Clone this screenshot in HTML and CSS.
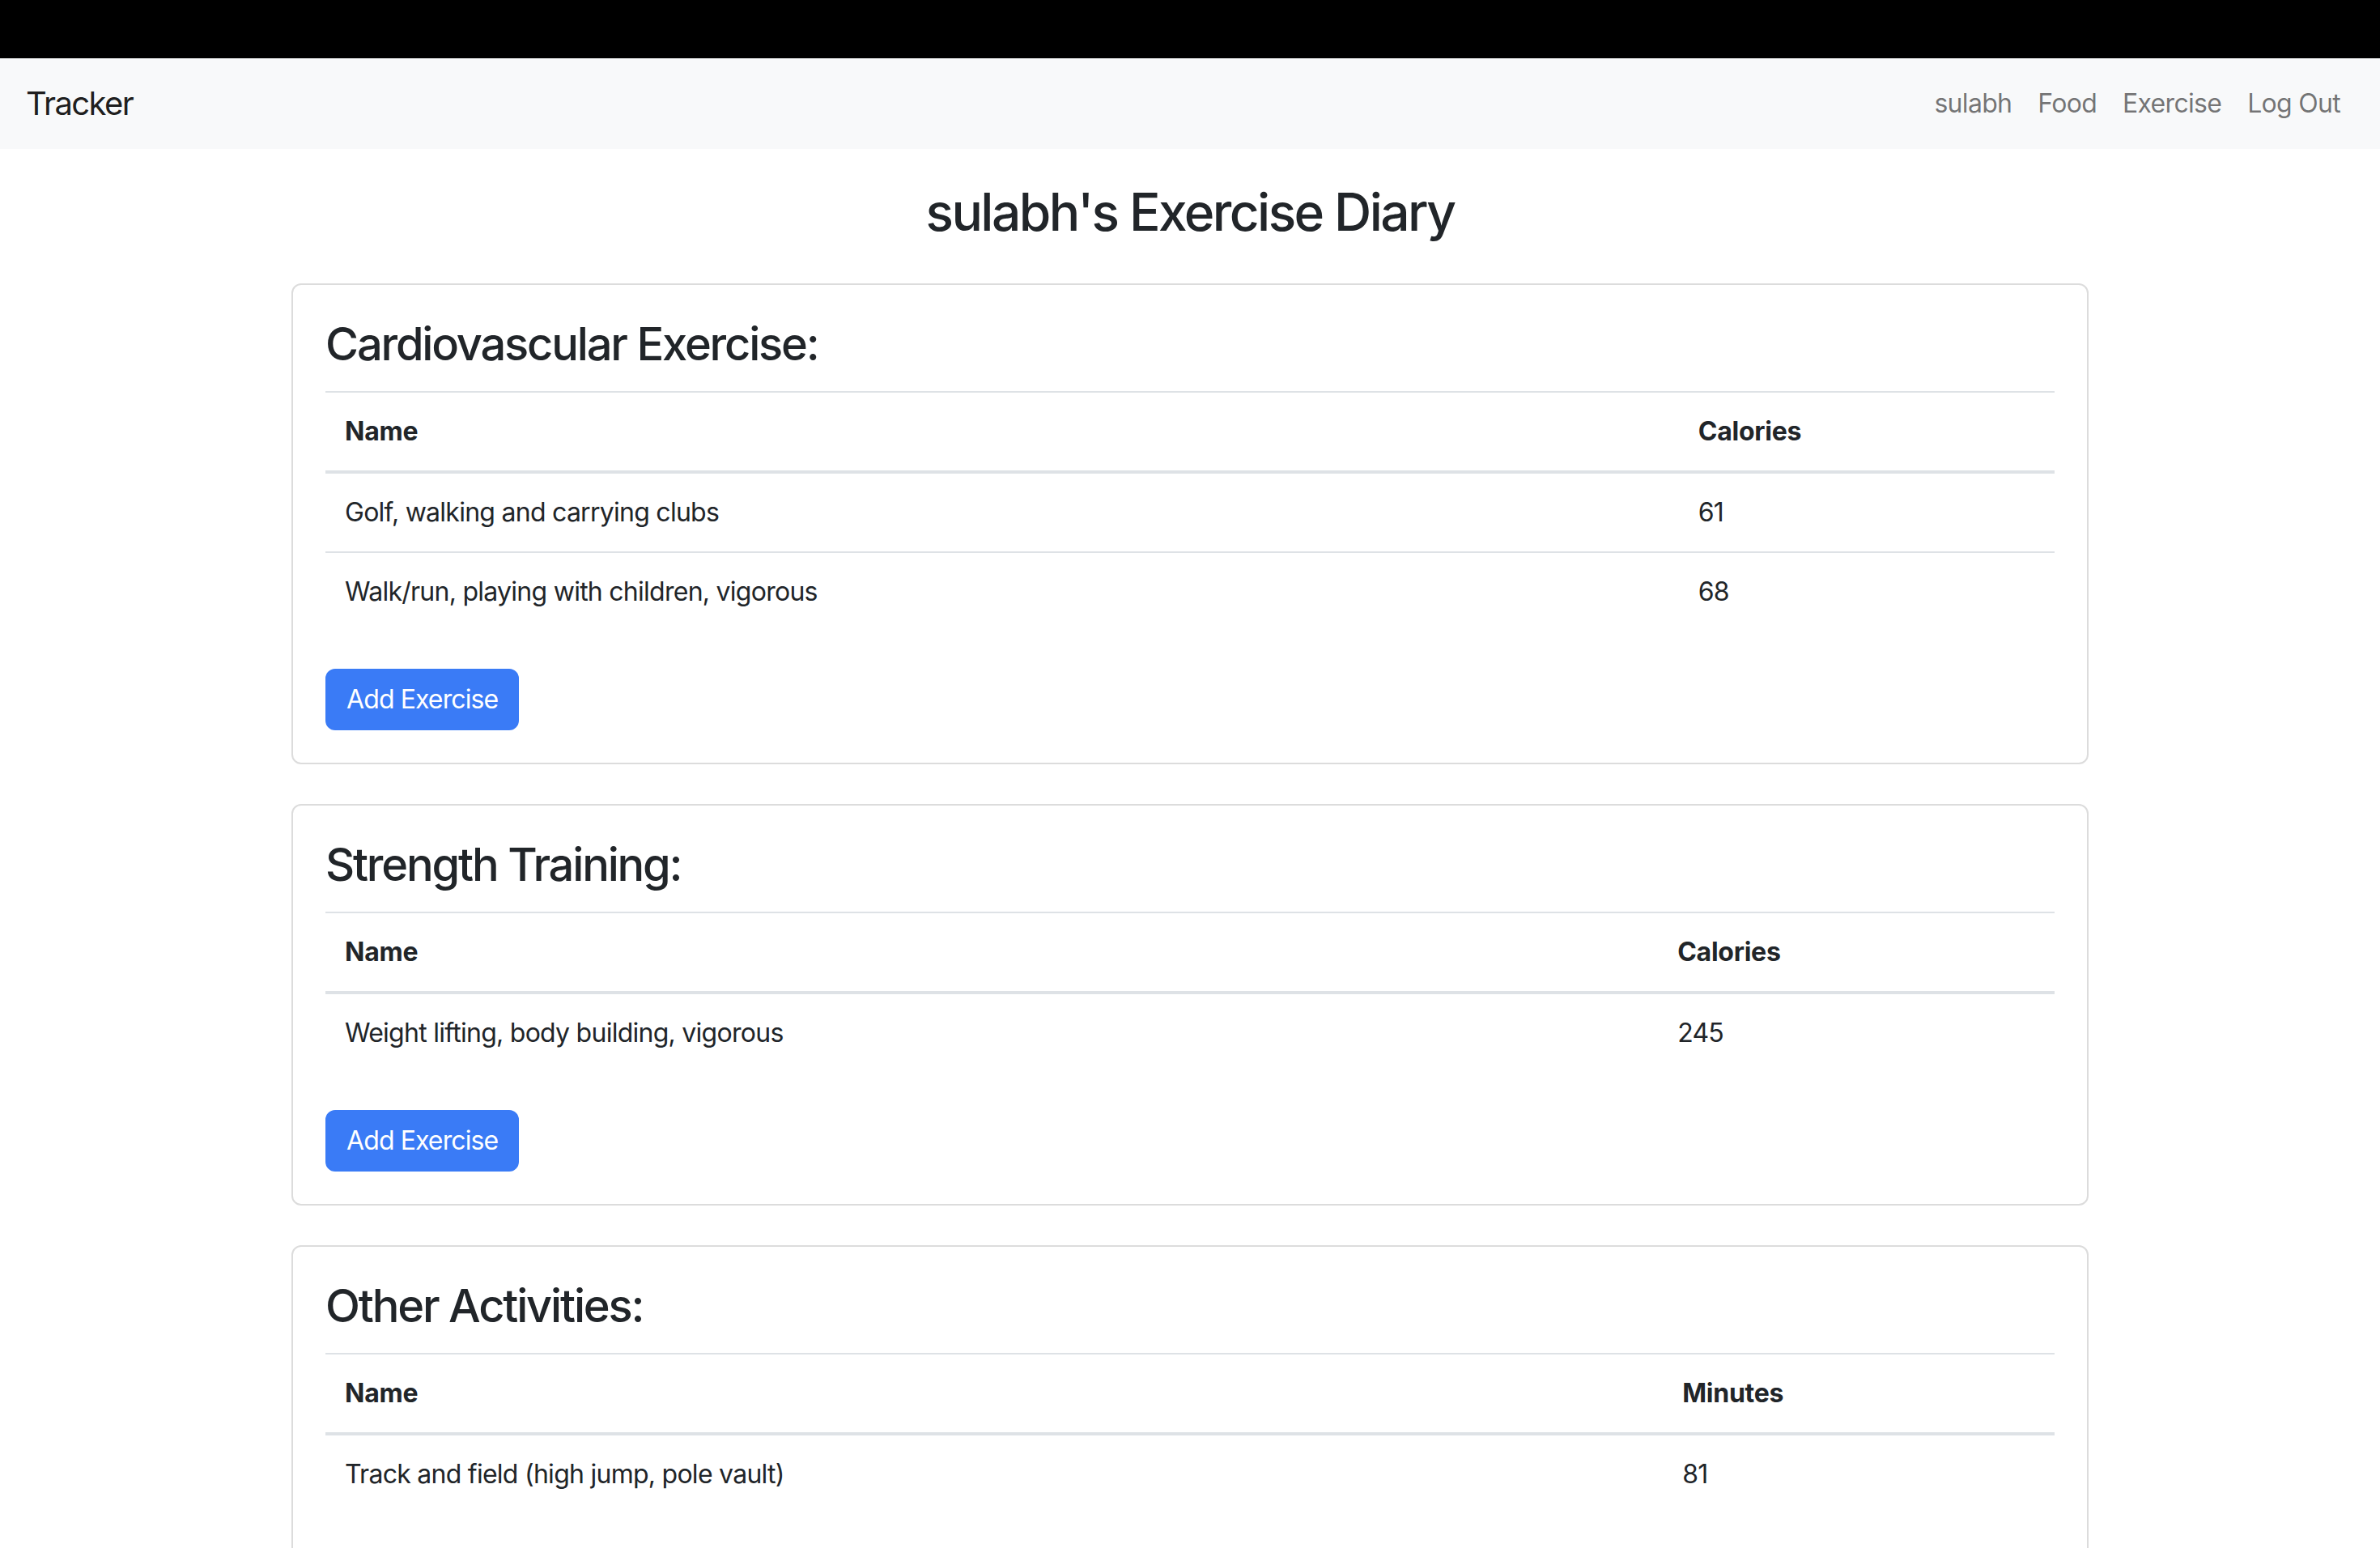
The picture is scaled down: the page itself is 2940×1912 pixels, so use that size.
FILE: index.html
```html
<!DOCTYPE html>
<html lang="en">
<head>
<meta charset="utf-8">
<title>Exercise Diary</title>
<link rel="stylesheet" href="styles.css">
</head>
<body>
<div class="topbar"></div>
<nav class="navbar">
  <a class="brand" href="#">Tracker</a>
  <div class="nav-links">
    <a class="nav-link" href="#">sulabh</a>
    <a class="nav-link" href="#">Food</a>
    <a class="nav-link" href="#">Exercise</a>
    <a class="nav-link" href="#">Log Out</a>
  </div>
</nav>
<main class="container">
  <h2 class="page-title">sulabh's Exercise Diary</h2>

  <section class="card">
    <h3 class="card-title">Cardiovascular Exercise:</h3>
    <table class="table">
      <thead><tr><th>Name</th><th>Calories</th></tr></thead>
      <tbody>
        <tr><td>Golf, walking and carrying clubs</td><td>61</td></tr>
        <tr><td>Walk/run, playing with children, vigorous</td><td>68</td></tr>
      </tbody>
    </table>
    <button class="btn">Add Exercise</button>
  </section>

  <section class="card">
    <h3 class="card-title">Strength Training:</h3>
    <table class="table">
      <thead><tr><th>Name</th><th>Calories</th></tr></thead>
      <tbody>
        <tr><td>Weight lifting, body building, vigorous</td><td>245</td></tr>
      </tbody>
    </table>
    <button class="btn">Add Exercise</button>
  </section>

  <section class="card">
    <h3 class="card-title">Other Activities:</h3>
    <table class="table">
      <thead><tr><th>Name</th><th>Minutes</th></tr></thead>
      <tbody>
        <tr><td>Track and field (high jump, pole vault)</td><td>81</td></tr>
      </tbody>
    </table>
    <button class="btn">Add Exercise</button>
  </section>
</main>
</body>
</html>
```
FILE: styles.css
```css
* { box-sizing: border-box; }
html, body {
  margin: 0;
  padding: 0;
  background: #ffffff;
}
body {
  font-family: Inter, "Liberation Sans", sans-serif;
  font-size: 32px;
  line-height: 1.5;
  color: #212529;
  letter-spacing: -0.023em;
}
.topbar {
  height: 72px;
  background: #000000;
}
.navbar {
  height: 112px;
  background: #f8f9fa;
  display: flex;
  align-items: center;
  justify-content: space-between;
  padding: 0 33px 0 32px;
}
.brand {
  font-size: 40px;
  line-height: 60px;
  letter-spacing: -0.04em;
  color: rgba(0, 0, 0, 0.9);
  text-decoration: none;
}
.nav-links {
  display: flex;
  align-items: center;
}
.nav-link {
  padding: 0 16px;
  font-size: 32px;
  line-height: 48px;
  letter-spacing: -0.022em;
  color: rgba(0, 0, 0, 0.55);
  text-decoration: none;
}
.container {
  width: 2220px;
  margin: 0 auto;
}
.page-title {
  margin: 40px 0 49px;
  text-align: center;
  font-size: 64px;
  font-weight: 500;
  line-height: 1.2;
  letter-spacing: -0.04em;
}
.card {
  border: 2px solid #dcdcdc;
  border-radius: 12px;
  padding: 40px;
  margin-bottom: 49px;
  background: #fff;
}
.card-title {
  margin: 0 0 24px;
  font-size: 56px;
  font-weight: 500;
  line-height: 1.2;
  letter-spacing: -0.039em;
}
.table {
  width: 100%;
  border-collapse: collapse;
  margin-bottom: 47px;
}
.table th,
.table td {
  text-align: left;
  padding: 24px;
  line-height: 48px;
  vertical-align: top;
}
.table th {
  font-weight: 700;
  letter-spacing: -0.008em;
}
.table thead tr {
  border-top: 2px solid #dee2e6;
  border-bottom: 4px solid #dee2e6;
}
.table tbody tr + tr {
  border-top: 2px solid #dee2e6;
}
.btn {
  display: inline-block;
  font-family: inherit;
  font-size: 32px;
  line-height: 48px;
  letter-spacing: -0.028em;
  padding: 12px 24px;
  color: #ffffff;
  background: #3a7bf6;
  border: 2px solid #3a7bf6;
  border-radius: 12px;
  cursor: pointer;
}
```
